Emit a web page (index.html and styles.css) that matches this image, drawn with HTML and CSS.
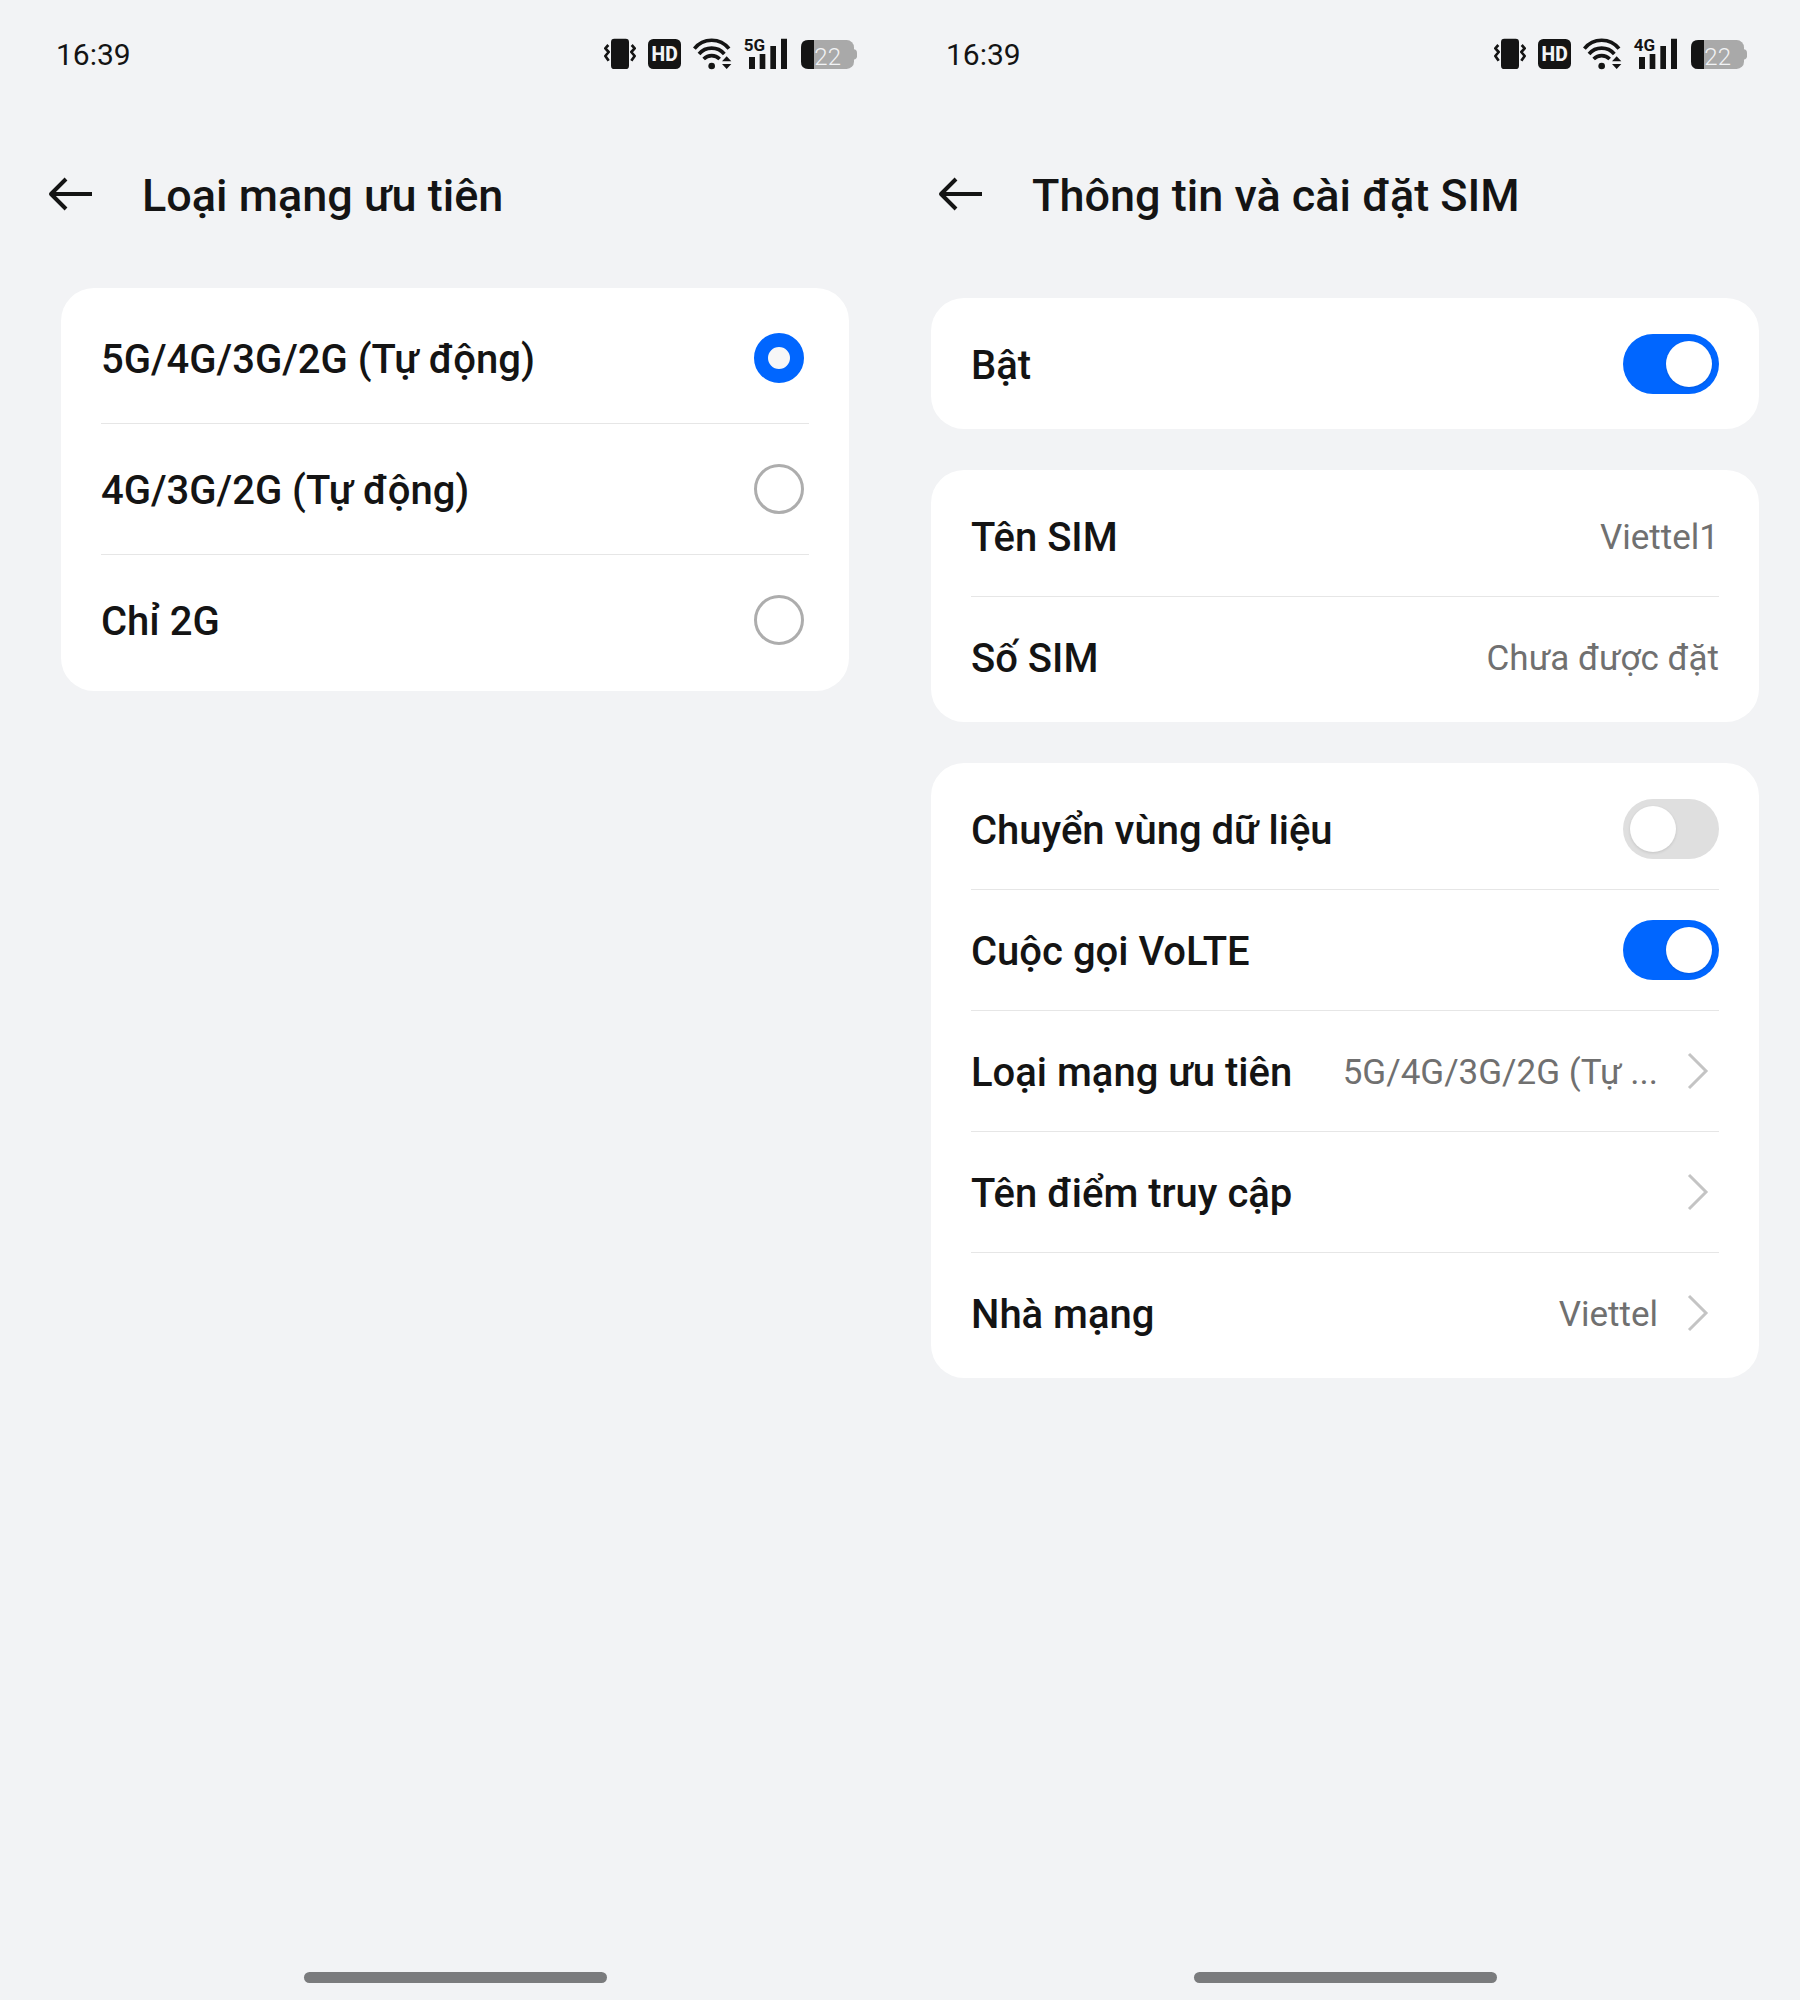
FILE: index.html
```
<!DOCTYPE html>
<html lang="vi">
<head>
<meta charset="utf-8" />
<title>Thông tin và cài đặt SIM</title>
<link rel="stylesheet" href="styles.css">
</head>
<body>

<!-- shared icons -->
<svg class="sprite" aria-hidden="true">
    <symbol id="i-vibrate" viewBox="39 39 96 96">
        <rect x="60" y="41" width="54" height="91" rx="10"/>
        <path d="M52 60L43 70L53 81L43 93L53 107M122 60L131 70L121 81L131 93L121 107" fill="none" stroke="currentColor" stroke-width="8" stroke-linejoin="round"/>
    </symbol>
    <symbol id="i-hd" viewBox="174 39 99 96">
        <rect x="174" y="42" width="99" height="90" rx="16"/>
        <text class="hd-text" x="224" y="108">HD</text>
    </symbol>
    <symbol id="i-wifi" viewBox="312 39 117 96">
        <path d="M316 71A66 66 0 0 1 420 71M330 87A50 50 0 0 1 406 87M344 102A34 34 0 0 1 392 102" fill="none" stroke="currentColor" stroke-width="11"/>
        <circle cx="368" cy="123" r="10"/>
        <path d="M413 94L427 109H399ZM399 117H427L413 132Z"/>
    </symbol>
    <symbol id="i-battery" viewBox="632 39 168 96">
        <path d="M786 73H790Q800 74 800 84V94Q800 103 790 104H786Z" fill="#a9a9a9"/>
        <rect x="632" y="45" width="159" height="87" rx="22" fill="#a9a9a9"/>
        <path d="M671 45H654Q632 45 632 67V110Q632 132 654 132H671Z"/>
        <text class="battery-text" x="672" y="119">22</text>
    </symbol>
    <symbol id="i-back" viewBox="0 0 46 36">
        <path d="M45 18H4M19 3L4 18L19 33" fill="none" stroke="currentColor" stroke-width="4" stroke-linejoin="round"/>
    </symbol>
    <symbol id="i-next" viewBox="0 0 22 38">
        <path d="M2 2L19 19L2 36" fill="none" stroke="currentColor" stroke-width="3"/>
    </symbol>
</svg>

<main class="screens">

    <section class="screen">
        <div class="status">
            <time>16:39</time>
            <div class="status-icons">
                <svg class="i-vibrate"><use href="#i-vibrate"/></svg>
                <svg class="i-hd"><use href="#i-hd"/></svg>
                <svg class="i-wifi"><use href="#i-wifi"/></svg>
                <svg class="i-bars" viewBox="462 39 135 96">
                    <path d="M477 96H495V132H477ZM509 87H526V132H509ZM541 63H558V132H541ZM573 41H591V132H573Z"/>
                    <text class="net-text" x="461" y="78">5G</text>
                </svg>
                <svg class="i-battery"><use href="#i-battery"/></svg>
            </div>
        </div>
        <header class="topbar">
            <button class="back" type="button" aria-label="Quay lại"><svg><use href="#i-back"/></svg></button>
            <h1>Loại mạng ưu tiên</h1>
        </header>
        <form class="cards cards-narrow">
            <div class="card card-tall">
                <label class="row"><span class="name">5G/4G/3G/2G (Tự động)</span><input class="radio" type="radio" name="network" checked></label>
                <label class="row"><span class="name">4G/3G/2G (Tự động)</span><input class="radio" type="radio" name="network"></label>
                <label class="row"><span class="name">Chỉ 2G</span><input class="radio" type="radio" name="network"></label>
            </div>
        </form>
        <div class="home-bar"></div>
    </section>

    <section class="screen">
        <div class="status">
            <time>16:39</time>
            <div class="status-icons">
                <svg class="i-vibrate"><use href="#i-vibrate"/></svg>
                <svg class="i-hd"><use href="#i-hd"/></svg>
                <svg class="i-wifi"><use href="#i-wifi"/></svg>
                <svg class="i-bars" viewBox="462 39 135 96">
                    <path d="M477 96H495V132H477ZM509 87H526V132H509ZM541 63H558V132H541ZM573 41H591V132H573Z"/>
                    <text class="net-text" x="461" y="78">4G</text>
                </svg>
                <svg class="i-battery"><use href="#i-battery"/></svg>
            </div>
        </div>
        <header class="topbar">
            <button class="back" type="button" aria-label="Quay lại"><svg><use href="#i-back"/></svg></button>
            <h1>Thông tin và cài đặt SIM</h1>
        </header>
        <form class="cards">
            <div class="card">
                <label class="row"><span class="name">Bật</span><input class="switch" type="checkbox" checked></label>
            </div>
            <div class="card">
                <div class="row"><span class="name">Tên SIM</span><span class="value">Viettel1</span></div>
                <div class="row"><span class="name">Số SIM</span><span class="value">Chưa được đặt</span></div>
            </div>
            <div class="card">
                <label class="row"><span class="name">Chuyển vùng dữ liệu</span><input class="switch" type="checkbox"></label>
                <label class="row"><span class="name">Cuộc gọi VoLTE</span><input class="switch" type="checkbox" checked></label>
                <a class="row" href="#network"><span class="name">Loại mạng ưu tiên</span><span class="value">5G/4G/3G/2G (Tự ...</span><svg class="next"><use href="#i-next"/></svg></a>
                <a class="row" href="#apn"><span class="name">Tên điểm truy cập</span><svg class="next"><use href="#i-next"/></svg></a>
                <a class="row" href="#carrier"><span class="name">Nhà mạng</span><span class="value">Viettel</span><svg class="next"><use href="#i-next"/></svg></a>
            </div>
        </form>
        <div class="home-bar"></div>
    </section>

</main>

</body>
</html>
```
FILE: styles.css
```
* {
	box-sizing:border-box;
}
body {
	margin:0;
	background:#f2f3f5;
	color:#141414;
	font-family:Roboto, "Noto Sans", sans-serif;
}
.sprite {
	display:none;
}
.screens {
	display:grid;
	grid-template-columns:1fr 1fr;
	min-height:100vh;
	padding:0 10px;
}
.screen {
	display:flex;
	flex-direction:column;
	min-width:0;
	padding-bottom:17px;
}

/* status bar */
.status {
	display:flex;
	align-items:center;
	justify-content:space-between;
	height:108px;
	padding:0 43px 0 46px;
}
.status time {
	font-size:30px;
	line-height:36px;
	padding-top:2px;
}
.status-icons {
	display:flex;
	gap:12px;
}
.status-icons svg {
	display:block;
	height:32px;
	fill:currentColor;
	overflow:visible;
}
.status-icons .i-vibrate {
	width:32px;
}
.status-icons .i-hd {
	width:33px;
}
.status-icons .i-wifi {
	width:39px;
}
.status-icons .i-bars {
	width:45px;
}
.status-icons .i-battery {
	width:56px;
}
.hd-text {
	fill:#f2f3f5;
	font-size:58px;
	font-weight:800;
	text-anchor:middle;
}
.net-text {
	font-size:51px;
	font-weight:700;
}
.battery-text {
	fill:#f2f3f5;
	font-size:72px;
	font-weight:300;
}

/* title */
.topbar {
	display:flex;
	align-items:center;
	gap:49px;
	height:172px;
	padding:0 37px;
}
.back {
	padding:0;
	border:0;
	background:none;
	color:inherit;
	cursor:pointer;
}
.back svg {
	display:block;
	width:46px;
	height:36px;
}
.topbar h1 {
	margin:0;
	padding-top:4px;
	font-size:45px;
	line-height:56px;
	font-weight:500;
}

/* cards */
.cards {
	display:flex;
	flex-direction:column;
	gap:41px;
	padding:18px 31px 0;
}
.cards-narrow {
	padding:8px 51px 0;
}
.card {
	padding:5px 40px;
	border-radius:33px;
	background:#fff;
}
.card-tall {
	padding:4px 40px 6px;
}
.row {
	display:flex;
	align-items:center;
	height:121px;
	color:inherit;
	text-decoration:none;
}
.card-tall .row {
	height:131px;
	padding-right:5px;
}
.row + .row {
	border-top:1px solid #e6e6e6;
}
.name {
	flex:none;
	margin-right:auto;
	padding-top:4px;
	font-size:40px;
	line-height:48px;
	font-weight:500;
}
.value {
	margin-left:20px;
	padding-top:4px;
	color:#707070;
	font-size:35px;
	line-height:48px;
	white-space:nowrap;
}
.next {
	flex:none;
	width:22px;
	height:38px;
	margin:0 10px 0 29px;
	color:#c4c4c4;
}

/* controls */
.radio {
	appearance:none;
	flex:none;
	width:50px;
	height:50px;
	margin:0;
	border:3px solid #adadad;
	border-radius:50%;
	cursor:pointer;
}
.radio:checked {
	border:14px solid #0066ff;
	background:#f7f7f7;
}
.switch {
	appearance:none;
	display:flex;
	flex:none;
	width:96px;
	height:60px;
	margin:0;
	padding:7px;
	border-radius:30px;
	background:#dfdfdf;
	cursor:pointer;
}
.switch::before {
	content:"";
	width:46px;
	height:46px;
	border-radius:50%;
	background:#fff;
	box-shadow:0 1px 3px rgba(0,0,0,.12);
}
.switch:checked {
	justify-content:flex-end;
	background:#0066ff;
}

.home-bar {
	width:303px;
	height:11px;
	margin:auto auto 0;
	border-radius:6px;
	background:#7a7b7d;
}
```
